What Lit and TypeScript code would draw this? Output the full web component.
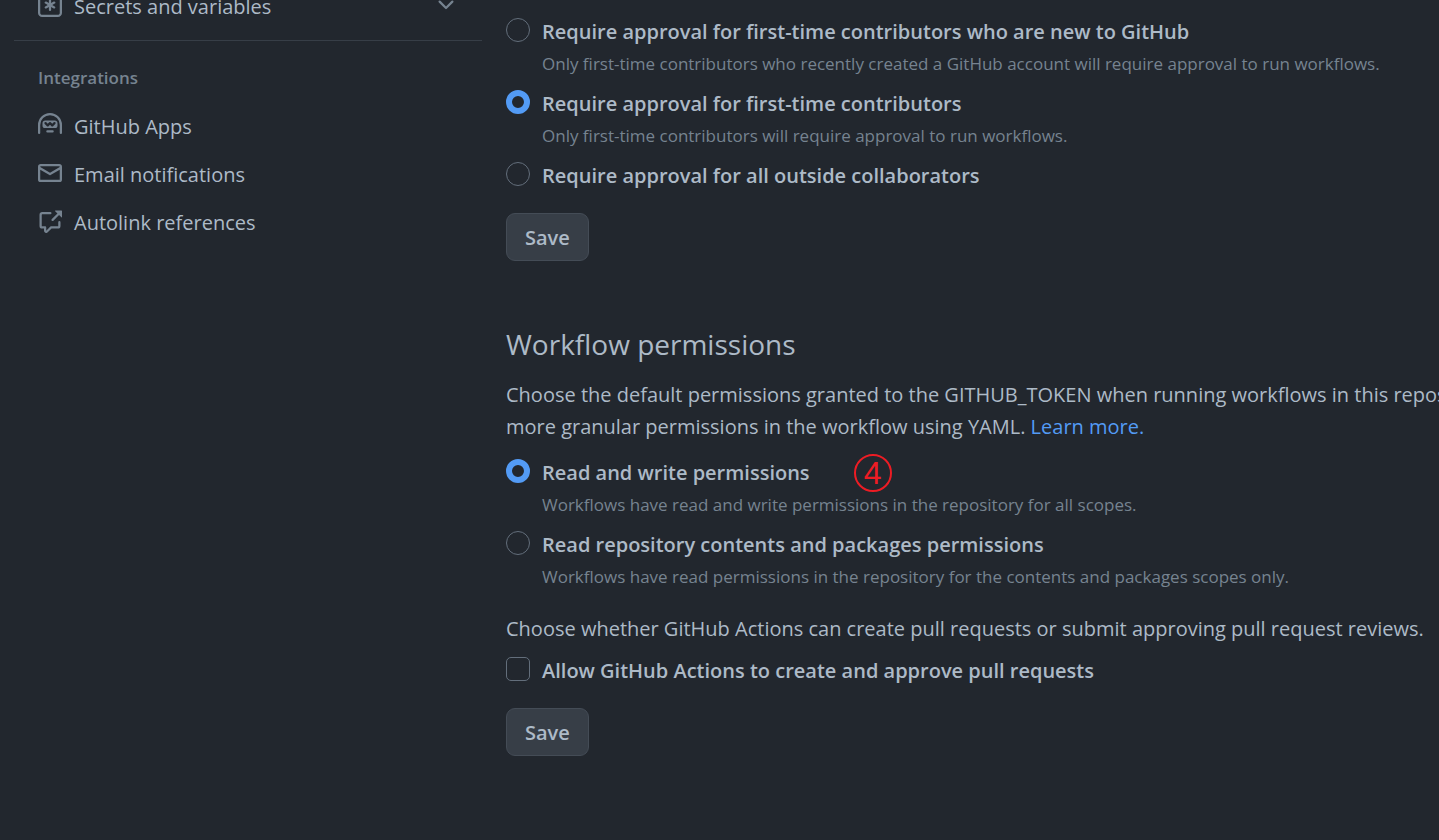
import { LitElement, html, css, svg, nothing } from "lit";
import { customElement, property, state } from "lit/decorators.js";

const ICONS = {
  secrets: svg`<path fill-rule="evenodd" d="M0 2.75A2.75 2.75 0 0 1 2.75 0h10.5A2.75 2.75 0 0 1 16 2.75v10.5A2.75 2.75 0 0 1 13.25 16H2.75A2.75 2.75 0 0 1 0 13.25ZM2.75 1.5c-.69 0-1.25.56-1.25 1.25v10.5c0 .69.56 1.25 1.25 1.25h10.5c.69 0 1.25-.56 1.25-1.25V2.75c0-.69-.56-1.25-1.25-1.25Z"/><path d="M8 4a.75.75 0 0 1 .75.75V6.7l1.69-.975a.75.75 0 0 1 .75 1.3L9.5 8l1.69.976a.75.75 0 0 1-.75 1.298L8.75 9.3v1.951a.75.75 0 0 1-1.5 0V9.299l-1.69.976a.75.75 0 0 1-.75-1.3L6.5 8l-1.69-.975a.75.75 0 0 1 .75-1.3l1.69.976V4.75A.75.75 0 0 1 8 4Z"/>`,
  chevron: svg`<path d="M12.78 5.22a.749.749 0 0 1 0 1.06l-4.25 4.25a.749.749 0 0 1-1.06 0L3.22 6.28a.749.749 0 1 1 1.06-1.06L8 8.939l3.72-3.719a.749.749 0 0 1 1.06 0Z"/>`,
  hubot: svg`<path d="M0 8a8 8 0 1 1 16 0v5.25a.75.75 0 0 1-1.5 0V8a6.5 6.5 0 1 0-13 0v5.25a.75.75 0 0 1-1.5 0V8Zm5.5 4.25a.75.75 0 0 1 .75-.75h3.5a.75.75 0 0 1 0 1.5h-3.5a.75.75 0 0 1-.75-.75Z"/><path fill-rule="evenodd" d="M3 6.75C3 5.784 3.784 5 4.75 5h6.5c.966 0 1.75.784 1.75 1.75v1.5A1.75 1.75 0 0 1 11.25 10h-6.5A1.75 1.75 0 0 1 3 8.25ZM4.47 6.22a.75.75 0 0 1 1.06 0l.97.97.97-.97a.748.748 0 0 1 1.06 0l.97.97.97-.97a.749.749 0 1 1 1.06 1.06l-1.5 1.5a.748.748 0 0 1-1.06 0L8 7.81l-.97.97a.748.748 0 0 1-1.06 0l-1.5-1.5a.75.75 0 0 1 0-1.06Z"/>`,
  mail: svg`<path d="M1.75 2h12.5c.966 0 1.75.784 1.75 1.75v8.5A1.75 1.75 0 0 1 14.25 14H1.75A1.75 1.75 0 0 1 0 12.25v-8.5C0 2.784.784 2 1.75 2ZM1.5 12.251c0 .138.112.25.25.25h12.5a.25.25 0 0 0 .25-.25V5.809L8.38 9.397a.75.75 0 0 1-.76 0L1.5 5.809v6.442Zm13-8.181v-.32a.25.25 0 0 0-.25-.25H1.75a.25.25 0 0 0-.25.25v.32L8 7.88Z"/>`,
  reference: svg`<path d="M2.75 3.5a.25.25 0 0 0-.25.25v7.5c0 .138.112.25.25.25h2a.75.75 0 0 1 .75.75v2.19l2.72-2.72a.749.749 0 0 1 .53-.22h4.5a.25.25 0 0 0 .25-.25v-2.5a.75.75 0 0 1 1.5 0v2.5A1.75 1.75 0 0 1 13.25 13H9.06l-2.573 2.573A1.458 1.458 0 0 1 4 14.543V13H2.75A1.75 1.75 0 0 1 1 11.25v-7.5C1 2.784 1.784 2 2.75 2h5.5a.75.75 0 0 1 0 1.5ZM16 1.25v4.146a.25.25 0 0 1-.427.177L14.03 4.03l-3.75 3.75a.749.749 0 1 1-1.06-1.06l3.75-3.75-1.543-1.543A.25.25 0 0 1 11.604 1h4.146a.25.25 0 0 1 .25.25Z"/>`,
};

type IconName = keyof typeof ICONS;

const icon = (name: IconName) =>
  html`<svg class="icon" viewBox="0 0 16 16" aria-hidden="true">${ICONS[name]}</svg>`;

interface Option {
  value: string;
  title: string;
  note?: string;
  step?: string;
}

const INTEGRATIONS: { icon: IconName; label: string }[] = [
  { icon: "hubot", label: "GitHub Apps" },
  { icon: "mail", label: "Email notifications" },
  { icon: "reference", label: "Autolink references" },
];

const APPROVALS: Option[] = [
  {
    value: "new",
    title: "Require approval for first-time contributors who are new to GitHub",
    note: "Only first-time contributors who recently created a GitHub account will require approval to run workflows.",
  },
  {
    value: "first",
    title: "Require approval for first-time contributors",
    note: "Only first-time contributors will require approval to run workflows.",
  },
  { value: "all", title: "Require approval for all outside collaborators" },
];

const PERMISSIONS: Option[] = [
  {
    value: "write",
    title: "Read and write permissions",
    note: "Workflows have read and write permissions in the repository for all scopes.",
    step: "4",
  },
  {
    value: "read",
    title: "Read repository contents and packages permissions",
    note: "Workflows have read permissions in the repository for the contents and packages scopes only.",
  },
];

@customElement("settings-nav")
export class SettingsNav extends LitElement {
  static styles = css`
    :host {
      display: block;
    }
    .list {
      list-style: none;
      margin: 0;
      padding: 0;
    }
    .item {
      display: flex;
      align-items: flex-start;
      gap: 12px;
      width: 100%;
      box-sizing: border-box;
      padding: 9px 24px;
      border: 0;
      background: none;
      color: #adbac7;
      font: inherit;
      line-height: 30px;
      text-align: left;
      text-decoration: none;
    }
    .icon {
      flex: none;
      width: 24px;
      height: 24px;
      margin-top: 1px;
      fill: #768390;
    }
    .label {
      flex: 1;
    }
    .group {
      margin: 9px 0 0;
      padding: 23px 24px 11px;
      border-top: 1px solid #373e47;
      color: #768390;
      font-size: 17px;
      font-weight: 600;
      line-height: 28px;
    }
  `;

  render() {
    return html`
      <nav aria-label="Settings">
        <button class="item" type="button" aria-expanded="false">
          ${icon("secrets")}<span class="label">Secrets and variables</span>${icon("chevron")}
        </button>
        <h3 class="group">Integrations</h3>
        <ul class="list">
          ${INTEGRATIONS.map(
            (entry) => html`<li>
              <a class="item" href="#">${icon(entry.icon)}<span class="label">${entry.label}</span></a>
            </li>`
          )}
        </ul>
      </nav>
    `;
  }
}

@customElement("option-group")
export class OptionGroup extends LitElement {
  static styles = css`
    :host {
      display: block;
    }
    .group {
      display: grid;
      gap: 8px;
      margin: 0;
      padding: 0;
      border: 0;
    }
    .option {
      display: grid;
      grid-template-columns: 24px 1fr;
      column-gap: 12px;
      line-height: 32px;
    }
    .radio {
      appearance: none;
      box-sizing: border-box;
      width: 24px;
      height: 24px;
      margin: 2px 0 0;
      border: 1px solid #636e7b;
      border-radius: 50%;
    }
    .radio:checked {
      border: 6px solid #539bf5;
    }
    .title {
      position: relative;
      justify-self: start;
      font-weight: 600;
    }
    .note {
      grid-column: 2;
      margin: 0;
      color: #768390;
      font-size: 17px;
    }
    .step {
      position: absolute;
      top: -3px;
      left: calc(100% + 44px);
      box-sizing: border-box;
      width: 38px;
      height: 38px;
      border: 2px solid #ed1c24;
      border-radius: 50%;
      color: #ed1c24;
      font: 400 32px/34px "Liberation Sans", sans-serif;
      text-align: center;
    }
  `;

  @property() name = "";
  @property() legend = "";
  @property() value = "";
  @property({ attribute: false }) options: Option[] = [];

  render() {
    return html`
      <fieldset class="group" aria-label=${this.legend}>
        ${this.options.map((option) => {
          const id = `${this.name}-${option.value}`;
          return html`<div class="option">
            <input
              class="radio"
              type="radio"
              id=${id}
              name=${this.name}
              .checked=${option.value === this.value}
              @change=${() => (this.value = option.value)}
            />
            <label class="title" for=${id}
              >${option.title}${option.step ? html`<span class="step">${option.step}</span>` : nothing}</label
            >
            ${option.note ? html`<p class="note">${option.note}</p>` : nothing}
          </div>`;
        })}
      </fieldset>
    `;
  }
}

@customElement("app-root")
export class AppRoot extends LitElement {
  static styles = css`
    :host {
      display: block;
      min-height: 100vh;
      overflow: hidden;
      background: #22272e;
      color: #adbac7;
      font: 400 20px/32px "Open Sans", "Noto Sans", sans-serif;
    }
    .shell {
      display: grid;
      grid-template-columns: 468px minmax(0, 1fr);
      column-gap: 24px;
      margin-top: -17px;
      padding-left: 14px;
    }
    .content {
      padding: 33px 0 80px;
      white-space: nowrap;
    }
    .save {
      display: block;
      height: 48px;
      margin-top: 21px;
      padding: 2px 18px 0;
      border: 1px solid #444c56;
      border-radius: 9px;
      background: #373e47;
      color: #adbac7;
      font: inherit;
      font-weight: 600;
    }
    .heading {
      margin: 61px 0 12px;
      font-size: 28px;
      font-weight: 400;
      line-height: 45px;
    }
    .text {
      margin: 0 0 14px;
    }
    .link {
      color: #539bf5;
      text-decoration: none;
    }
    .question {
      margin: 20px 0 10px;
    }
    .check {
      display: flex;
      align-items: flex-start;
      gap: 12px;
      font-weight: 600;
    }
    .box {
      appearance: none;
      box-sizing: border-box;
      width: 24px;
      height: 24px;
      margin: 2px 0 0;
      border: 1px solid #636e7b;
      border-radius: 5px;
    }
    .box:checked {
      background: #539bf5;
    }
  `;

  @state() private allowPulls = false;

  render() {
    return html`
      <div class="shell">
        <settings-nav></settings-nav>
        <main class="content">
          <option-group name="approval" legend="Fork pull request approval" value="first" .options=${APPROVALS}></option-group>
          <button class="save" type="button">Save</button>

          <h2 class="heading">Workflow permissions</h2>
          <p class="text">
            Choose the default permissions granted to the GITHUB_TOKEN when running workflows in this repository. You can specify<br />
            more granular permissions in the workflow using YAML. <a class="link" href="#">Learn more.</a>
          </p>
          <option-group name="permission" legend="Workflow permissions" value="write" .options=${PERMISSIONS}></option-group>

          <p class="question">Choose whether GitHub Actions can create pull requests or submit approving pull request reviews.</p>
          <div class="check">
            <input
              class="box"
              type="checkbox"
              id="allow-pulls"
              .checked=${this.allowPulls}
              @change=${(event: Event) => (this.allowPulls = (event.target as HTMLInputElement).checked)}
            />
            <label for="allow-pulls">Allow GitHub Actions to create and approve pull requests</label>
          </div>
          <button class="save" type="button">Save</button>
        </main>
      </div>
    `;
  }
}
